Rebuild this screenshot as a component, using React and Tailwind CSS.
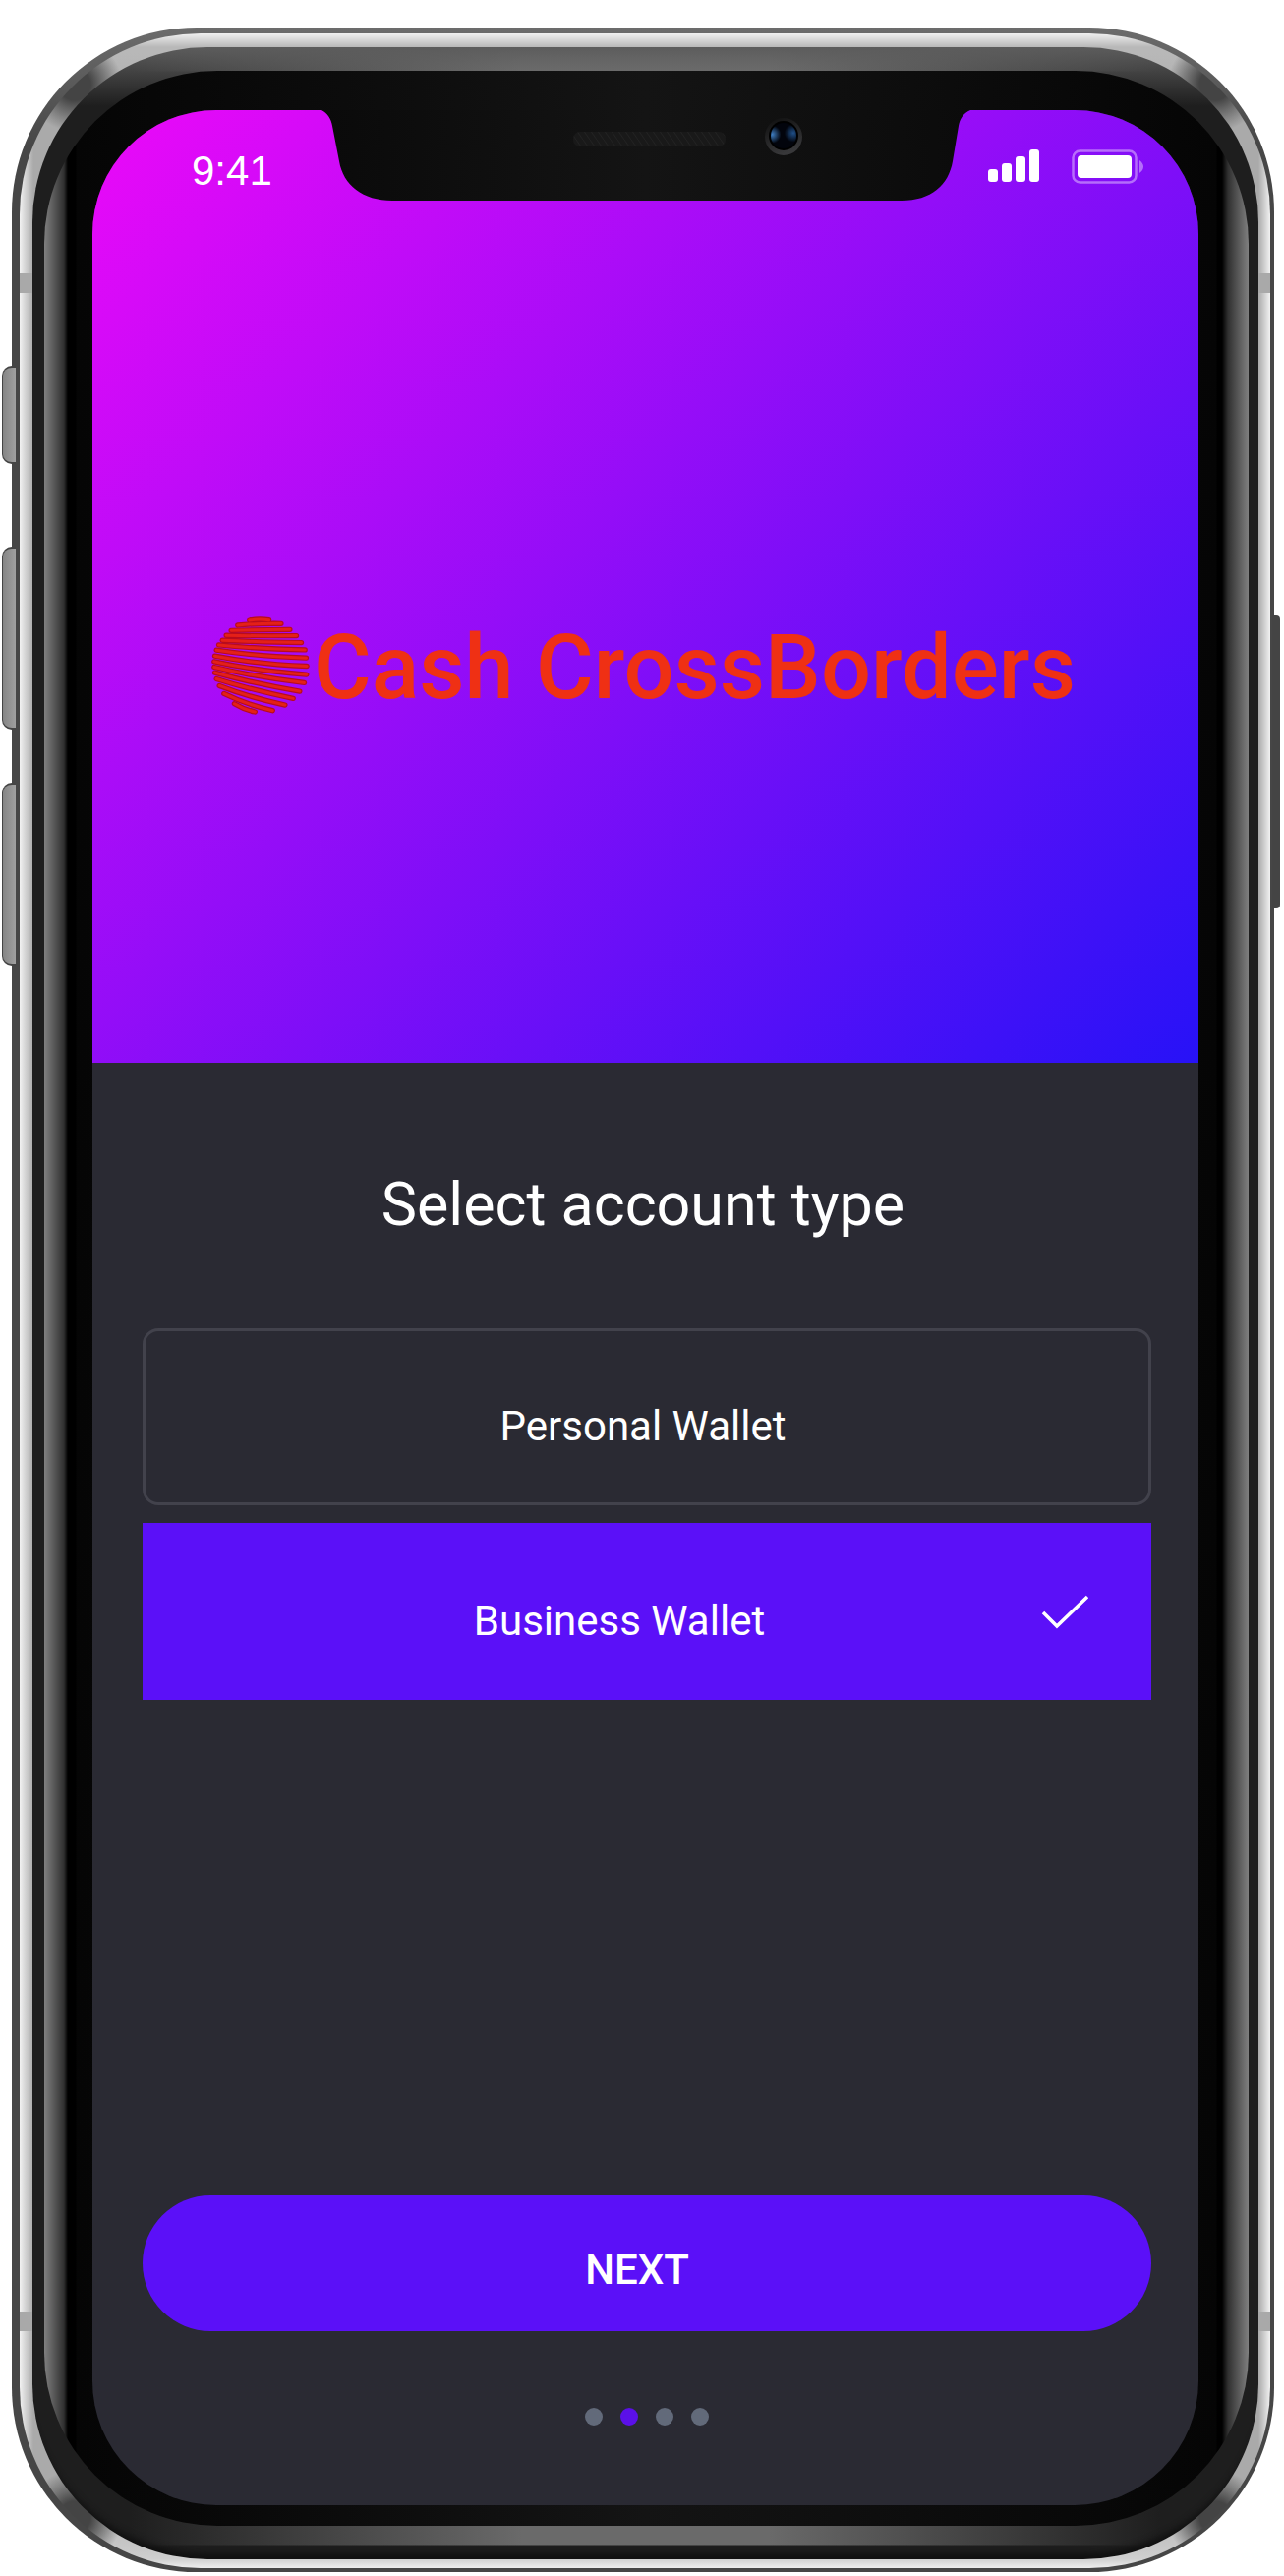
import { useState } from "react";

const GLOBE_LINES = [
  "M166 95Q195 89 226 94",
  "M130 110Q190 104 263 105",
  "M110 126Q190 124 290 123",
  "M95 141Q190 143 310 142",
  "M83 156Q190 161 325 163",
  "M72 170Q190 182 336 185",
  "M65 186Q180 204 340 210",
  "M60 204Q190 229 342 235",
  "M58 221Q180 248 341 261",
  "M58 238Q190 269 334 286",
  "M60 255Q180 288 320 312",
  "M65 274Q170 307 300 334",
  "M74 295Q165 330 275 354",
  "M88 319Q155 352 237 371",
  "M120 350Q150 368 183 375",
];

function Globe() {
  return (
    <svg viewBox="50 80 300 304" className="h-[101px] w-[100px] shrink-0" fill="none" strokeLinecap="round" aria-hidden="true">
      {GLOBE_LINES.map((d) => (
        <path key={d} d={d} stroke="#b80c1c" strokeWidth="16" />
      ))}
      {GLOBE_LINES.map((d) => (
        <path key={d} d={d} stroke="#e42018" strokeWidth="9" />
      ))}
    </svg>
  );
}

function Notch() {
  return (
    <svg viewBox="0 0 660 92" className="absolute top-0 left-1/2 h-[92px] w-[660px] -translate-x-1/2" aria-hidden="true">
      <defs>
        <linearGradient id="notchFill">
          <stop offset="0" stopColor="#0a0a0a" />
          <stop offset="0.5" stopColor="#141414" />
          <stop offset="1" stopColor="#0b0b0b" />
        </linearGradient>
        <linearGradient id="ring" x1="0" y1="0" x2="0.4" y2="1">
          <stop offset="0" stopColor="#0e0e0e" />
          <stop offset="1" stopColor="#38383a" />
        </linearGradient>
        <radialGradient id="glintLeft" cx="0.05" cy="0.45" r="0.35">
          <stop offset="0" stopColor="#3f7fc4" />
          <stop offset="1" stopColor="#3f7fc4" stopOpacity="0" />
        </radialGradient>
        <radialGradient id="glintRight" cx="0.88" cy="0.4" r="0.35">
          <stop offset="0" stopColor="#1f4f88" />
          <stop offset="1" stopColor="#1f4f88" stopOpacity="0" />
        </radialGradient>
        <pattern id="mesh" width="7" height="10" patternUnits="userSpaceOnUse">
          <rect width="7" height="10" fill="#191919" />
          <path d="M0 0L7 10" stroke="#222" />
        </pattern>
      </defs>
      <path d="M0 0C6 3 10 9 11 16L18 52C22 76 42 92 72 92H590C620 92 638 76 642 52L648 16C649 9 653 3 660 0Z" fill="url(#notchFill)" />
      <rect x="256" y="22" width="155" height="15" rx="7" fill="url(#mesh)" />
      <circle cx="470" cy="27" r="19" fill="url(#ring)" />
      <circle cx="470" cy="26" r="15" fill="#000" />
      <circle cx="470" cy="26" r="13" fill="#02040c" />
      <circle cx="470" cy="26" r="13" fill="url(#glintLeft)" />
      <circle cx="470" cy="26" r="13" fill="url(#glintRight)" />
    </svg>
  );
}

function StatusIcons() {
  return (
    <div className="flex items-start gap-8">
      <svg viewBox="0 0 53 34" className="h-[34px] w-[53px]" fill="#fff" aria-label="Signal">
        <rect x="0" y="20" width="10" height="13" rx="3" />
        <rect x="14" y="14" width="10" height="19" rx="3" />
        <rect x="28" y="7" width="10" height="26" rx="3" />
        <rect x="42" y="0" width="10" height="33" rx="3" />
      </svg>
      <svg viewBox="0 0 74 36" className="h-9 w-[74px]" aria-label="Battery">
        <rect x="1.5" y="1.5" width="64" height="32" rx="7" fill="none" stroke="#fff" strokeOpacity="0.4" strokeWidth="2.5" />
        <rect x="6" y="6" width="55" height="23" rx="4" fill="#fff" />
        <path d="M69 11Q73 14 73 17.500Q73 21 69 24Z" fill="#fff" fillOpacity="0.4" />
      </svg>
    </div>
  );
}

function SideKey({ className }) {
  return (
    <span
      className={`absolute -left-[10px] w-3.5 rounded-l-[10px] border-y-2 border-l border-[#444] bg-linear-to-r from-[#858585] to-[#a0a0a0] ${className}`}
    />
  );
}

function WalletOption({ value, label, selected, onSelect }) {
  return (
    <label
      className={`flex h-[180px] cursor-pointer items-center px-16 pt-5 ${
        selected ? "bg-[#5b10f8]" : "rounded-2xl border-3 border-[#42424c]"
      }`}
    >
      <input
        type="radio"
        name="wallet"
        value={value}
        checked={selected}
        onChange={() => onSelect(value)}
        className="sr-only"
      />
      <span className="flex-1 pr-2 text-center">{label}</span>
      {selected && (
        <svg viewBox="0 0 48 36" className="mb-5 h-9 w-12" fill="none" stroke="#fff" strokeWidth="3.5" aria-hidden="true">
          <path d="M2 19L16 33L47 3" />
        </svg>
      )}
    </label>
  );
}

export default function App() {
  const [wallet, setWallet] = useState("business");
  const [page, setPage] = useState(1);

  return (
    <div className="flex min-h-screen flex-col bg-white pt-7 pr-[10px] pb-1 pl-3 font-['Roboto',sans-serif] text-white">
      {/* Phone shell: dark rim, polished steel, inner rim, bezel */}
      <div className="relative flex flex-1 flex-col rounded-[188px] bg-[linear-gradient(to_bottom,#6c6c6c,#464646_120px)] pt-1.5 pr-1 pb-1 pl-2">
        <SideKey className="top-[344px] h-[100px]" />
        <SideKey className="top-[528px] h-[186px]" />
        <SideKey className="top-[768px] h-[186px]" />
        <span className="absolute top-[598px] -right-1.5 h-[298px] w-2 rounded-r-sm bg-[#444]" />

        <div className="flex flex-1 flex-col rounded-[184px] bg-[radial-gradient(circle_at_56px_52px,#444_16px,transparent_48px),radial-gradient(circle_at_calc(100%-56px)_52px,#444_16px,transparent_48px),radial-gradient(circle_at_56px_calc(100%-52px),#444_16px,transparent_48px),radial-gradient(circle_at_calc(100%-56px)_calc(100%-52px),#444_16px,transparent_48px),linear-gradient(to_bottom,#f0f0f0,#b8b8b8_14px,#b8b8b8_20px,transparent_90px,transparent_244px,#a9a9a9_244px,#a9a9a9_264px,transparent_264px,transparent_calc(100%-261px),#a9a9a9_calc(100%-261px),#a9a9a9_calc(100%-241px),transparent_calc(100%-241px),transparent_calc(100%-90px),#c8c8c8_calc(100%-20px),#d0d0d0_calc(100%-9px),#eee),linear-gradient(to_right,#f2f2f2,#aaa_14px,#aaa_calc(100%-12px),#f2f2f2)] pt-3.5 pr-3 pb-[9px] pl-[13px]">
          <div className="flex flex-1 flex-col rounded-[178px] bg-[linear-gradient(to_bottom,#5c5c5c,transparent_60px),linear-gradient(to_right,#1e1e1e_100px,transparent_40%,transparent_60%,#1e1e1e_calc(100%-100px)),linear-gradient(to_bottom,#8a8a8a,#808080_24px,#1e1e1e_25px,#1e1e1e_60%,#6a6a6a_calc(100%-34px),#6a6a6a_calc(100%-15px),#1e1e1e_calc(100%-14px))] pr-2.5 pl-3 shadow-[inset_0_-14px_6px_-8px_#111]">
            <div className="mt-6 mb-[34px] flex flex-1 flex-col rounded-[176px] bg-[linear-gradient(to_right,#808080,#303030_20px,#000_24px,#000_32px,#050505_33px,#141414_50%,#050505_calc(100%-33px),#000_calc(100%-32px),#000_calc(100%-27px),#303030_calc(100%-21px),#808080)] pt-10 pr-[51px] pb-[21px] pl-[49px]">
              <main className="relative flex flex-1 flex-col overflow-hidden rounded-[126px] bg-[#2a2a33]">
                <section className="flex h-[969px] flex-col bg-linear-[135deg] from-[#ec09f8] to-[#2712f7]">
                  <header className="flex items-start justify-between pt-10 pr-[55px] pl-[101px]">
                    <time className="font-['Liberation_Sans',sans-serif] text-[42px] leading-[44px]">9:41</time>
                    <StatusIcons />
                  </header>
                  <Notch />
                  <div className="flex flex-1 items-center justify-center gap-1 pt-[100px] pr-1 pb-6">
                    <Globe />
                    <h1 className="pt-1.5 text-[90px] leading-none font-medium whitespace-nowrap text-[#ef3014]">
                      Cash CrossBorders
                    </h1>
                  </div>
                </section>

                <form className="flex flex-1 flex-col pt-[108px] pr-12 pb-[81px] pl-[51px] text-[42px] leading-[48px]" onSubmit={(e) => e.preventDefault()}>
                  <h2 className="pr-2 text-center text-[61px] leading-[72px]">Select account type</h2>
                  <fieldset aria-label="Account type" className="mt-[90px] flex flex-col gap-[18px]">
                    <WalletOption value="personal" label="Personal Wallet" selected={wallet === "personal"} onSelect={setWallet} />
                    <WalletOption value="business" label="Business Wallet" selected={wallet === "business"} onSelect={setWallet} />
                  </fieldset>
                  <button type="submit" className="mt-auto h-[138px] cursor-pointer rounded-[72px] bg-[#5b10f8] pt-3.5 pr-5 font-medium">
                    NEXT
                  </button>
                  <nav className="mt-[78px] flex justify-center gap-[18px]" aria-label="Steps">
                    {[0, 1, 2, 3].map((step) => (
                      <button
                        key={step}
                        type="button"
                        aria-label={`Step ${step + 1}`}
                        onClick={() => setPage(step)}
                        className={`size-[18px] cursor-pointer rounded-full ${page === step ? "bg-[#5b10e8]" : "bg-[#626a7a]"}`}
                      />
                    ))}
                  </nav>
                </form>
              </main>
            </div>
          </div>
        </div>
      </div>
    </div>
  );
}
